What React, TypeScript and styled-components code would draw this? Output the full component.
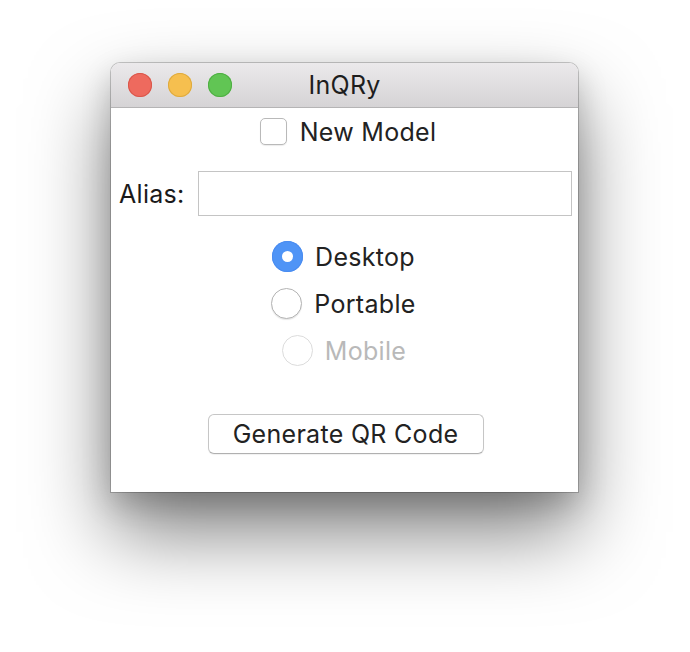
import React from "react";
import styled, { createGlobalStyle } from "styled-components";

const Global = createGlobalStyle`
  html, body { margin: 0; padding: 0; background: #ffffff; }
  body { font-family: Inter, "Noto Sans", sans-serif; }
`;

const Page = styled.div`
  width: 690px;
  height: 652px;
  padding: 63px 0 0 111px;
  box-sizing: border-box;
  overflow: hidden;
`;

const Window = styled.div`
  width: 467px;
  height: 429px;
  display: flex;
  flex-direction: column;
  background: #ffffff;
  border-radius: 9px 9px 0 0;
  box-shadow: 0 0 0 1px rgba(0, 0, 0, 0.2), 0 40px 80px rgba(0, 0, 0, 0.5),
    0 12px 30px rgba(0, 0, 0, 0.18);
  overflow: hidden;
`;

const TitleBar = styled.div`
  height: 44px;
  flex: none;
  display: flex;
  align-items: center;
  position: relative;
  background: linear-gradient(#ebe9eb, #d5d3d5);
  border-bottom: 1px solid #b5b4b5;
  padding-left: 17px;
  gap: 16px;
`;

const Light = styled.span<{ $c: string; $b: string }>`
  width: 24px;
  height: 24px;
  border-radius: 50%;
  background: ${(p) => p.$c};
  box-shadow: inset 0 0 0 1px ${(p) => p.$b};
`;

const Title = styled.div`
  position: absolute;
  left: 0;
  right: 0;
  top: 0;
  bottom: 0;
  display: flex;
  align-items: center;
  justify-content: center;
  font-size: 25px;
  letter-spacing: 0.3px;
  color: #1e1e1e;
  pointer-events: none;
`;

const Body = styled.div`
  flex: 1;
  display: flex;
  flex-direction: column;
  align-items: center;
  padding: 10px 6px 0 8px;
  font-size: 25px;
  letter-spacing: 0.3px;
`;

const CheckRow = styled.label`
  display: flex;
  align-items: center;
  gap: 13px;
  height: 27px;
  color: #222;
  margin-left: 5px;
`;

const CheckBox = styled.span`
  width: 25px;
  height: 25px;
  border: 1px solid #b9b9b9;
  border-radius: 5px;
  background: #fff;
  box-shadow: 0 1px 1px rgba(0, 0, 0, 0.08);
`;

const AliasRow = styled.div`
  align-self: stretch;
  display: flex;
  align-items: center;
  gap: 13px;
  margin-top: 26px;
  color: #1a1a1a;
`;

const Input = styled.div`
  flex: 1;
  height: 43px;
  border: 1px solid #c4c4c4;
  background: #fff;
`;

const RadioGroup = styled.div`
  display: flex;
  flex-direction: column;
  align-items: center;
  gap: 16px;
  margin-top: 25px;
`;

const RadioRow = styled.div<{ $shift: number; $disabled?: boolean }>`
  display: flex;
  align-items: center;
  gap: 12px;
  height: 31px;
  color: ${(p) => (p.$disabled ? "#b9b9b9" : "#222")};
  margin-left: ${(p) => p.$shift}px;
`;

const Radio = styled.span<{ $on?: boolean; $disabled?: boolean }>`
  width: 31px;
  height: 31px;
  box-sizing: border-box;
  border-radius: 50%;
  display: flex;
  align-items: center;
  justify-content: center;
  background: ${(p) => (p.$on ? "#4f94f6" : "#fff")};
  border: ${(p) =>
    p.$on ? "none" : `1px solid ${p.$disabled ? "#dcdcdc" : "#b4b4b4"}`};
  box-shadow: ${(p) =>
    p.$on ? "inset 0 0 0 1px #4a8cf0" : p.$disabled ? "none" : "0 1px 1px rgba(0,0,0,0.1)"};

  &::after {
    content: "";
    display: ${(p) => (p.$on ? "block" : "none")};
    width: 11px;
    height: 11px;
    border-radius: 50%;
    background: #fff;
  }
`;

const Button = styled.button`
  margin-top: 48px;
  width: 276px;
  height: 40px;
  border: 1px solid #c6c6c6;
  border-bottom-color: #b0b0b0;
  border-radius: 6px;
  background: #fff;
  box-shadow: 0 1px 1px rgba(0, 0, 0, 0.06);
  font-family: inherit;
  font-size: 25px;
  letter-spacing: 0.3px;
  color: #222;
  padding: 0;
`;

export default function App() {
  return (
    <>
      <Global />
      <Page>
        <Window>
          <TitleBar>
            <Light $c="#ee6a5e" $b="#d9574b" />
            <Light $c="#f6bf4f" $b="#deaa3f" />
            <Light $c="#61c554" $b="#4fae43" />
            <Title>InQRy</Title>
          </TitleBar>
          <Body>
            <CheckRow>
              <CheckBox />
              New Model
            </CheckRow>
            <AliasRow>
              <span>Alias:</span>
              <Input />
            </AliasRow>
            <RadioGroup>
              <RadioRow $shift={-4}>
                <Radio $on />
                Desktop
              </RadioRow>
              <RadioRow $shift={-4}>
                <Radio />
                Portable
              </RadioRow>
              <RadioRow $shift={-3} $disabled>
                <Radio $disabled />
                Mobile
              </RadioRow>
            </RadioGroup>
            <Button>Generate QR Code</Button>
          </Body>
        </Window>
      </Page>
    </>
  );
}
